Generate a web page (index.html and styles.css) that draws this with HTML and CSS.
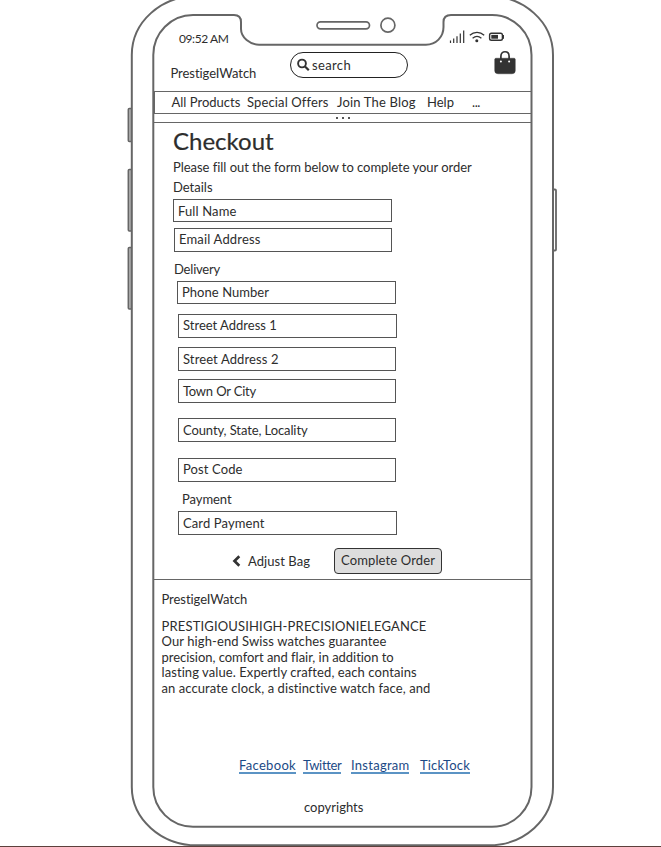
FILE: index.html
```
<!DOCTYPE html>
<html lang="en">
<head>
<meta charset="utf-8">
<title>Checkout</title>
<link rel="stylesheet" href="styles.css">
</head>
<body>
<div class="stage">
  <svg class="frame" width="661" height="847" viewBox="0 0 661 847" aria-hidden="true">
    <g fill="#aaa" stroke="#666" stroke-width="1.5">
      <rect x="128.3" y="108.5" width="3.5" height="33" rx="1"/>
      <rect x="128.3" y="169.5" width="3.5" height="61.5" rx="1"/>
      <rect x="128.3" y="247.5" width="3.5" height="61.5" rx="1"/>
      <rect x="553" y="189.5" width="3" height="61" rx="1" fill="#fff" stroke-width="1.8"/>
    </g>
    <g fill="none" stroke="#666" stroke-width="2">
      <path d="M131.800 787V55C131.800 22 161 -4 197 -4H488C524 -4 553 22 553 55V787C553 819 524 845.300 489 845.300H197C161 845.300 131.800 819 131.800 787Z" fill="#fff"/>
      <path d="M153.300 787V55C153.300 33 171 15 193 15H234C239 15 241 18 241 22V29C241 37.500 250 44.700 259 44.700H426C436 44.700 443.500 37 443.500 27V22C443.500 18 446 15 451 15H492C514 15 531.500 33 531.500 55V787C531.500 809 514 826.700 492 826.700H193C171 826.700 153.300 809 153.300 787Z" fill="#fff"/>
      <rect x="317" y="21.800" width="52.500" height="7" rx="3.500" stroke-width="1.700"/>
      <circle cx="387.900" cy="25.200" r="7" stroke-width="1.700"/>
    </g>
  </svg>

  <main class="screen">
    <div class="status">
      <span class="time">09:52 AM</span>
      <svg class="indicators" width="56" height="16" viewBox="449 29 56 16" aria-hidden="true">
        <path d="M450.500 40.500V43M453.700 38.500V43M457 36.200V43M460.300 33.500V43M463.700 30.500V43" stroke="#333" stroke-width="1.200" fill="none"/>
        <path d="M469.800 35.300C474 31.300 480 31.300 484.200 35.300M472.600 38.300C475.200 36 478.800 36 481.400 38.300" stroke="#333" stroke-width="1.200" fill="none"/>
        <circle cx="476.800" cy="40.700" r="1.500" fill="#333"/>
        <rect x="489.600" y="33.300" width="12.800" height="7" rx="1.800" fill="none" stroke="#333" stroke-width="1.400"/>
        <rect x="491.300" y="34.900" width="6.700" height="3.800" fill="#333"/>
        <path d="M503.500 35V38.800" stroke="#333" stroke-width="1"/>
      </svg>
    </div>

    <header class="header">
      <span class="brand">PrestigeIWatch</span>
      <div class="search">
        <svg width="14" height="14" viewBox="0 0 14 14" aria-hidden="true"><circle cx="5" cy="5.500" r="3.900" fill="none" stroke="#333" stroke-width="1.900"/><path d="M8 8.500L11.800 12.300" stroke="#333" stroke-width="2.200"/></svg>
        <span>search</span>
      </div>
      <svg class="bag" width="22" height="25" viewBox="0 0 22 25" aria-hidden="true">
        <path d="M2 8.200H20Q21.200 8.200 21.300 9.400V20.500Q21.300 23.800 18 23.800H4Q.700 23.800 .700 20.500V9.400Q.800 8.200 2 8.200Z" fill="#333" stroke="#333" stroke-width=".4"/>
        <path d="M6.900 11V6.300C6.900 .200 15.100 .200 15.100 6.300V11" fill="none" stroke="#333" stroke-width="1.700"/>
        <circle cx="6.900" cy="11.400" r="1" fill="#fff"/><circle cx="15.100" cy="11.400" r="1" fill="#fff"/>
      </svg>
    </header>

    <nav class="nav">
      <span class="products">All Products</span>
      <span class="offers">Special Offers</span>
      <span class="blog">Join The Blog</span>
      <span class="help">Help</span>
      <span class="more">...</span>
    </nav>
    <div class="handle"><i></i><i></i><i></i></div>

    <form class="checkout">
      <h1>Checkout</h1>
      <p class="intro">Please fill out the form below to complete your order</p>
      <p class="legend details">Details</p>
      <div class="field name">Full Name</div>
      <div class="field email">Email Address</div>
      <p class="legend delivery">Delivery</p>
      <div class="field phone">Phone Number</div>
      <div class="field street1">Street Address 1</div>
      <div class="field street2">Street Address 2</div>
      <div class="field town">Town Or City</div>
      <div class="field county">County, State, Locality</div>
      <div class="field post">Post Code</div>
      <p class="legend payment">Payment</p>
      <div class="field card">Card Payment</div>
      <div class="actions">
        <svg width="9" height="12" viewBox="0 0 9 12" aria-hidden="true"><path d="M7.300 1.300L2.500 6L7.300 10.700" fill="none" stroke="#333" stroke-width="2.700"/></svg>
        <span class="adjust">Adjust Bag</span>
        <div class="submit">Complete Order</div>
      </div>
    </form>

    <footer class="footer">
      <p class="brand">PrestigeIWatch</p>
      <p class="about"><span class="l1">PRESTIGIOUSIHIGH-PRECISIONIELEGANCE</span><br><span class="l2">Our high-end Swiss watches guarantee</span><br><span class="l3">precision, comfort and flair, in addition to</span><br><span class="l4">lasting value. Expertly crafted, each contains</span><br><span class="l4">an accurate clock, a distinctive watch face, and</span></p>
      <div class="links">
        <a class="facebook">Facebook</a>
        <a class="twitter">Twitter</a>
        <a class="instagram">Instagram</a>
        <a class="ticktock">TickTock</a>
      </div>
      <p class="copyrights">copyrights</p>
    </footer>
  </main>
</div>
</body>
</html>
```
FILE: styles.css
```
* { box-sizing: border-box; }
body { margin: 0; background: #fff; color: #2d2d2d; font: 13px/16px Lato, sans-serif; }
h1, p { margin: 0; }
svg { display: block; flex: none; }
.stage { position: relative; height: 847px; overflow: hidden; border-bottom: 1px solid #5c403c; }
.frame { position: absolute; left: 0; top: 0; }
.screen { position: relative; width: 378px; margin-left: 154px; white-space: nowrap; }

.status { height: 45px; display: flex; align-items: flex-start; justify-content: space-between; padding: 29px 27px 0 25px; }
.time { font-size: 12px; line-height: 20px; letter-spacing: -.4px; }

.header { height: 46px; display: flex; align-items: flex-start; }
.header .brand { width: 119px; margin: 20px 0 0 16.5px; }
.search { width: 118px; height: 26px; margin: 7px 0 0 .5px; padding: 0 0 1px 6px; display: flex; align-items: center; gap: 1px; border: 1px solid #222; border-radius: 13px; letter-spacing: .35px; }
.bag { margin: 5px 0 0 86px; }
.brand { letter-spacing: -.06px; }

.nav { height: 23px; display: flex; align-items: center; padding-left: 16.5px; border: 1px solid #666; line-height: 14px; padding-bottom: 1px; }
.products { width: 75.5px; }
.offers { width: 90px; letter-spacing: .13px; }
.blog { width: 90px; letter-spacing: .17px; }
.help { width: 45px; }
.more { letter-spacing: -.4px; }
.handle { height: 9px; display: flex; gap: 4px; justify-content: center; padding-top: 3px; border-bottom: 1px solid #666; }
.handle i { width: 2px; height: 2px; background: #555; }

.checkout { height: 456px; padding-left: 19px; }
h1 { height: 36px; padding-top: 2px; font-size: 24px; line-height: 32px; font-weight: 400; -webkit-text-stroke: .2px; }
.intro { height: 20px; letter-spacing: -.04px; }
.legend { line-height: 16px; }
.details { height: 20px; }
.field { width: 219px; height: 24px; margin-left: 5px; padding-left: 4px; border: 1px solid #555; line-height: 22px; }
.name { margin-left: 0; height: 23px; line-height: 22px; letter-spacing: .13px; }
.email { width: 218px; margin: 6px 0 0 1px; letter-spacing: .17px; line-height: 21px; }
.delivery { height: 18px; margin: 9px 0 2px 1px; letter-spacing: -.2px; }
.phone { margin-left: 4px; height: 23px; line-height: 21px; letter-spacing: .05px; }
.street1 { margin-top: 10px; line-height: 21px; }
.street2 { width: 218px; margin-top: 9px; letter-spacing: .11px; }
.town { width: 218px; margin-top: 8px; letter-spacing: -.3px; word-spacing: .5px; }
.county { width: 218px; margin-top: 15px; letter-spacing: -.1px; }
.post { width: 218px; margin-top: 16px; letter-spacing: .11px; line-height: 21px; }
.payment { margin: 9px 0 4px 9px; letter-spacing: -.07px; }
.card { letter-spacing: .11px; }
.actions { height: 26px; margin: 13px 0 0 59px; display: flex; align-items: center; }
.adjust { width: 86px; margin-left: 7px; letter-spacing: .06px; }
.submit { width: 108px; height: 26px; padding-left: 6px; border: 1px solid #333; border-radius: 4px; background: #ddd; line-height: 23px; letter-spacing: .13px; }

.footer { border-top: 1px solid #666; padding: 11px 0 0 7.5px; }
.about { margin-top: 12px; line-height: 15.4px; }
.l1 { letter-spacing: .157px; }
.l2 { letter-spacing: .1px; }
.l3 { letter-spacing: -.035px; }
.l4 { letter-spacing: .08px; }
.links { display: flex; margin: 61px 0 0 77.5px; color: #1c4a86; }
.links a { height: 17px; line-height: 17px; border-bottom: 2px solid #5b93c4; }
.facebook { width: 57px; letter-spacing: .316px; }
.twitter { width: 38px; margin-left: 7px; letter-spacing: -.33px; }
.instagram { width: 58px; margin-left: 10px; letter-spacing: .27px; }
.ticktock { width: 50px; margin-left: 11px; letter-spacing: .16px; }
.copyrights { margin: 25px 0 0 142.5px; }
```
